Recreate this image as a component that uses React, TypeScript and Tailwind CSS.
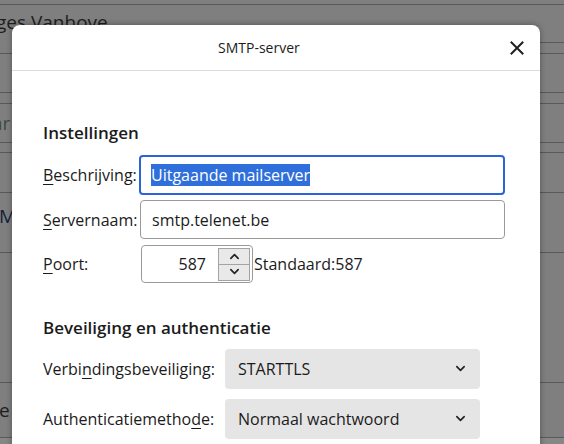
import React from 'react';

const font = { fontFamily: '"Open Sans", "Noto Sans", sans-serif' };

const Chevron = ({ up = false, className = '' }: { up?: boolean; className?: string }) => (
  <svg viewBox="0 0 12 8" className={className} fill="none" stroke="currentColor" strokeWidth={1.8} strokeLinecap="round" strokeLinejoin="round">
    {up ? <path d="M2 6.5 6 2.5l4 4" /> : <path d="M2 1.5 6 5.5l4-4" />}
  </svg>
);

// underline the access key letter
const Label = ({ before, key_, after }: { before: string; key_: string; after: string }) => (
  <span>
    {before}
    <span className="underline underline-offset-[3px] decoration-1">{key_}</span>
    {after}
  </span>
);

const Backdrop = () => (
  <div className="flex flex-col text-[19px] text-[#1e1e1e]">
    <div className="h-[5px] border-b border-[#595959]" />
    <div className="h-[49px] border-b border-[#595959] flex flex-col">
      <div className="h-[37px] pt-[4px] leading-[26px] ml-[-4px] whitespace-nowrap">ges Vanhove</div>
      <div className="ml-[540px] border-b border-[#595959]" />
    </div>
    <div className="h-[39px] border-b border-[#595959]" />
    <div className="h-[11px] border-b border-[#595959]" />
    <div className="h-[39px] border-b border-[#595959] flex items-center ml-[-8px] text-[#414a43]">ar</div>
    <div className="h-[10px] border-b border-[#595959]" />
    <div className="h-[40px] border-b border-[#595959]" />
    <div className="h-[60px] border-b border-[#595959] pt-[10px] ml-[-1px] text-[#14213d] leading-[26px]">M</div>
    <div className="h-[130px] border-b border-[#595959]" />
    <div className="h-[55px] border-b border-[#595959] flex items-center ml-[-1px]">e</div>
    <div className="h-[20px] bg-[#878787]" />
  </div>
);

export default function App() {
  return (
    <div className="relative h-[444px] w-[564px] overflow-hidden bg-[#7f7f7f]" style={font}>
      <Backdrop />

      <div className="absolute left-[12px] top-[25px] w-[528px] h-[440px] rounded-t-[8px] bg-white shadow-[0_0_6px_rgba(0,0,0,0.35)] text-[#1b1b1b]">
        <div className="relative h-[46px] border-b border-[#dadada] flex items-center pl-[206px]">
          <span className="text-[14px]">SMTP-server</span>
          <button className="absolute right-[16px] top-[16px] text-[#202020]">
            <svg viewBox="0 0 14 14" className="w-[14px] h-[14px]" fill="none" stroke="currentColor" strokeWidth={2} strokeLinecap="square">
              <path d="M1.5 1.5l11 11M12.5 1.5l-11 11" />
            </svg>
          </button>
        </div>

        <div className="pl-[31px] pr-[35px] text-[16px]">
          <div className="pt-[50px] h-[84px] text-[17px] font-semibold text-[#1b1b1b] leading-[24px]">Instellingen</div>

          <div className="flex items-center h-[40px]">
            <div className="w-[96px] shrink-0"><Label before="" key_="B" after="eschrijving:" /></div>
            <div className="flex-1 h-[40px] rounded-[4px] border-2 border-[#2b63da] flex items-center pl-[10px]">
              <span className="bg-[#2f6fdb] text-white leading-[22px]">Uitgaande mailserver</span>
            </div>
          </div>

          <div className="flex items-center h-[39px] mt-[5px]">
            <div className="w-[97px] shrink-0"><Label before="" key_="S" after="ervernaam:" /></div>
            <div className="flex-1 h-[39px] rounded-[4px] border border-[#9a9a9a] flex items-center pl-[11px]">
              smtp.telenet.be
            </div>
          </div>

          <div className="flex items-center h-[38px] mt-[6px]">
            <div className="w-[98px] shrink-0"><Label before="" key_="P" after="oort:" /></div>
            <div className="w-[112px] h-[38px] rounded-[4px] border border-[#9a9a9a] flex items-center justify-end pr-[2px]">
              <span className="mr-[12px]">587</span>
              <div className="w-[32px] h-[33px] flex flex-col border border-[#a3a3a3] bg-[#e9e9e9] text-[#222]">
                <div className="flex-1 flex items-center justify-center border-b border-[#a3a3a3]">
                  <Chevron up className="w-[11px] h-[8px]" />
                </div>
                <div className="flex-1 flex items-center justify-center">
                  <Chevron className="w-[11px] h-[8px]" />
                </div>
              </div>
            </div>
            <span className="ml-[1px]">Standaard:587</span>
          </div>

          <div className="pt-[33px] h-[66px] text-[17px] font-semibold leading-[24px]">Beveiliging en authenticatie</div>

          <div className="flex items-center h-[40px]">
            <div className="w-[182px] shrink-0"><Label before="Verbi" key_="n" after="dingsbeveiliging:" /></div>
            <div className="w-[255px] h-[40px] rounded-[4px] bg-[#e5e5e5] flex items-center justify-between pl-[13px] pr-[14px]">
              <span>STARTTLS</span>
              <Chevron className="w-[11px] h-[8px] text-[#222]" />
            </div>
          </div>

          <div className="flex items-center h-[40px] mt-[10px]">
            <div className="w-[182px] shrink-0"><Label before="Authenticatiemetho" key_="d" after="e:" /></div>
            <div className="w-[255px] h-[40px] rounded-[4px] bg-[#e5e5e5] flex items-center justify-between pl-[13px] pr-[14px]">
              <span>Normaal wachtwoord</span>
              <Chevron className="w-[11px] h-[8px] text-[#222]" />
            </div>
          </div>
        </div>
      </div>
    </div>
  );
}
